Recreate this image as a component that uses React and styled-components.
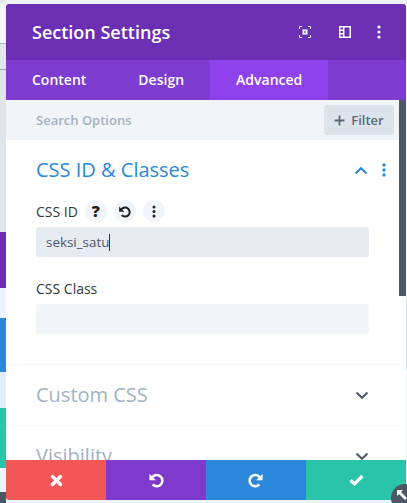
import React from 'react';
import styled, { createGlobalStyle } from 'styled-components';

const GlobalStyle = createGlobalStyle`
  html, body { margin: 0; padding: 0; }
  body { font-family: "Open Sans", "Noto Sans", sans-serif; }
  * { box-sizing: border-box; }
`;

const leftBands = [
  { h: 4, c: '#e8ebee' }, { h: 39, c: '#f4f8fc' }, { h: 1, c: '#a9b4bf' }, { h: 25, c: '#e2e5e9' },
  { h: 1, c: '#8fa3b5' }, { h: 162, c: '#dfe4ea' }, { h: 56, c: '#6b2fb3' }, { h: 30, c: '#ebf3fc' },
  { h: 54, c: '#2b87da' }, { h: 36, c: '#e3edf7' }, { h: 60, c: '#29c4a9' }, { h: 24, c: '#eef5fd' },
  { h: 6, c: '#4c5866' }, { h: 5, c: '#4c5866' },
];

const UndoIcon = ({ size = 16, color = '#fff', flip }) => (
  <svg width={size} height={size} viewBox="0 0 16 16" style={flip ? { transform: 'scaleX(-1)' } : undefined}>
    <path d="M4.4 5.2A5.6 5.6 0 1 1 4.6 12.4" fill="none" stroke={color} strokeWidth="2.5" />
    <path d="M1.4 1.8V8.2H7.8Z" fill={color} />
  </svg>
);

const Dots = ({ color = '#fff', gap = 5, r = 1.6 }) => (
  <svg width="6" height={gap * 2 + 6} viewBox={`0 0 6 ${gap * 2 + 6}`}>
    <circle cx="3" cy="3" r={r} fill={color} />
    <circle cx="3" cy={3 + gap} r={r} fill={color} />
    <circle cx="3" cy={3 + gap * 2} r={r} fill={color} />
  </svg>
);

const Chevron = ({ up, color = '#4c5866' }) => (
  <svg width="14" height="9" viewBox="0 0 14 9">
    <path d={up ? 'M1.5 7.5L7 2.2l5.5 5.3' : 'M1.5 1.5L7 6.8l5.5-5.3'} fill="none" stroke={color} strokeWidth="2" />
  </svg>
);

export default function App() {
  return (
    <Page>
      <GlobalStyle />
      <LeftStrip>
        {leftBands.map((b, i) => (
          <Band key={i} $h={b.h} $c={b.c} />
        ))}
      </LeftStrip>
      <Modal>
        <Header>
          <Title>Section Settings</Title>
          <HeaderIcons>
            <svg width="12" height="12" viewBox="0 0 12 12" fill="none">
              <path d="M.5 3V.5H3M9 .5h2.500V3M11.500 9v2.500H9M3 11.500H.5V9" stroke="#fff" strokeWidth="1" />
              <rect x="3.500" y="3.500" width="5" height="5" fill="#fff" />
              <rect x="5.200" y="5.200" width="1.600" height="1.600" fill="#6b2fb3" />
            </svg>
            <svg width="12" height="12" viewBox="0 0 12 12">
              <path
                fillRule="evenodd"
                d="M0 0h12v12H0ZM1.500 1.500V3.500H4V1.500ZM1.500 5V7H4V5ZM1.500 8.500V10.500H4V8.500ZM5.500 1.500V10.500H10.500V1.500Z"
                fill="#fff"
              />
            </svg>
            <Dots />
          </HeaderIcons>
        </Header>
        <Tabs>
          <Tab>Content</Tab>
          <Tab>Design</Tab>
          <Tab $active>Advanced</Tab>
        </Tabs>
        <ScrollRow>
          <Content>
            <SearchRow>
              <SearchText>Search Options</SearchText>
              <FilterButton>
                <svg width="11" height="11" viewBox="0 0 11 11">
                  <path d="M5.500 .5v10M.5 5.500h10" stroke="#5c6978" strokeWidth="1.800" />
                </svg>
                Filter
              </FilterButton>
            </SearchRow>
            <Section>
              <SectionHead>
                <SectionTitle $open>CSS ID &amp; Classes</SectionTitle>
                <Chevron up color="#2b87da" />
                <Dots color="#2b87da" gap={5} r={1.7} />
              </SectionHead>
              <Field>
                <LabelRow>
                  <Label>CSS ID</Label>
                  <RoundButtons>
                    <RoundButton>
                      <Question>?</Question>
                    </RoundButton>
                    <RoundButton>
                      <UndoIcon size={13} color="#1f1f1f" />
                    </RoundButton>
                    <RoundButton>
                      <Dots color="#1f1f1f" gap={4.5} r={1.5} />
                    </RoundButton>
                  </RoundButtons>
                </LabelRow>
                <Input $focus>
                  seksi_satu
                  <Caret />
                </Input>
              </Field>
              <Field>
                <LabelRow>
                  <Label>CSS Class</Label>
                </LabelRow>
                <Input />
              </Field>
            </Section>
            <Collapsed>
              <SectionTitle>Custom CSS</SectionTitle>
              <Chevron />
            </Collapsed>
            <Collapsed>
              <SectionTitle>Visibility</SectionTitle>
              <Chevron />
            </Collapsed>
          </Content>
          <Track>
            <Thumb />
          </Track>
        </ScrollRow>
        <Footer>
          <FootButton $c="#f25757">
            <svg width="13" height="13" viewBox="0 0 13 13">
              <path d="M2.500 2.500l8 8M10.500 2.500l-8 8" stroke="#fff" strokeWidth="3.400" strokeLinecap="round" />
            </svg>
          </FootButton>
          <FootButton $c="#7f3acd">
            <UndoIcon />
          </FootButton>
          <FootButton $c="#2b87da">
            <UndoIcon flip />
          </FootButton>
          <FootButton $c="#29c4a9">
            <svg width="15" height="12" viewBox="0 0 15 12">
              <path d="M1.600 6.200l3.900 3.600L13.400 2" fill="none" stroke="#fff" strokeWidth="3.200" />
            </svg>
          </FootButton>
        </Footer>
      </Modal>
      <RightStrip />
      <ResizeHandle>
        <svg width="12" height="12" viewBox="0 0 12 12">
          <path d="M1 1h6L5 3l6 6-2 2-6-6-2 2Z" fill="#fff" />
        </svg>
      </ResizeHandle>
    </Page>
  );
}

const Page = styled.div`
  position: relative;
  width: 407px;
  height: 503px;
  display: flex;
  overflow: hidden;
  background: #eef3f9;
`;

const LeftStrip = styled.div`
  width: 6px;
  display: flex;
  flex-direction: column;
  flex-shrink: 0;
`;

const Band = styled.div`
  height: ${(p) => p.$h}px;
  background: ${(p) => p.$c};
  flex-shrink: 0;
`;

const RightStrip = styled.div`
  width: 1px;
  background: linear-gradient(#e8ebee 0 4px, #f1f3f6 4px 300px, #d8e6ec 300px 370px, #eef3f9 370px);
`;

const Modal = styled.div`
  width: 400px;
  height: 496px;
  margin-top: 4px;
  display: flex;
  flex-direction: column;
  border-radius: 3px;
  overflow: hidden;
  background: #fff;
`;

const Header = styled.div`
  height: 56px;
  background: #6b2fb3;
  display: flex;
  align-items: center;
  justify-content: space-between;
  padding: 0 24px 0 26px;
  flex-shrink: 0;
`;

const Title = styled.div`
  color: #fff;
  font-size: 18px;
  font-weight: 600;
  padding-bottom: 1px;
`;

const HeaderIcons = styled.div`
  display: flex;
  align-items: center;
  gap: 28px;

  & > svg:last-child {
    margin-left: -3px;
  }
`;

const Tabs = styled.div`
  height: 40px;
  background: #7e3bd0;
  display: flex;
  flex-shrink: 0;
`;

const Tab = styled.div`
  padding: 0 26px 1px;
  display: flex;
  align-items: center;
  color: #fff;
  font-size: 14px;
  font-weight: 600;
  background: ${(p) => (p.$active ? '#8f42ec' : 'transparent')};
`;

const ScrollRow = styled.div`
  flex: 1;
  min-height: 0;
  display: flex;
`;

const Content = styled.div`
  flex: 1;
  min-width: 0;
  overflow: hidden;
`;

const Track = styled.div`
  width: 7px;
  flex-shrink: 0;
`;

const Thumb = styled.div`
  height: 196px;
  background: #4c5866;
`;

const SearchRow = styled.div`
  height: 40px;
  background: #f1f5f9;
  display: flex;
  align-items: center;
  justify-content: space-between;
  padding: 0 5px 0 30px;
`;

const SearchText = styled.div`
  color: #a3b0c2;
  font-size: 13px;
  font-weight: 600;
`;

const FilterButton = styled.div`
  width: 70px;
  height: 30px;
  background: #dde3ea;
  border-radius: 3px;
  display: flex;
  align-items: center;
  justify-content: center;
  gap: 6px;
  color: #5c6978;
  font-size: 13px;
  font-weight: 600;
`;

const Section = styled.div`
  height: 225px;
  padding: 19px 30px 0;
  border-bottom: 1px solid #f1f5f9;
`;

const SectionHead = styled.div`
  display: flex;
  align-items: center;
  height: 22px;
  gap: 13px;
  margin-right: -18px;
  margin-bottom: 19px;

  & > svg:first-of-type {
    margin-left: auto;
  }
`;

const SectionTitle = styled.div`
  font-size: 20px;
  font-weight: 400;
  line-height: 22px;
  color: ${(p) => (p.$open ? '#2b87da' : '#a3b1c4')};
`;

const Field = styled.div`
  margin-bottom: 20px;
`;

const LabelRow = styled.div`
  display: flex;
  align-items: center;
  height: 22px;
  margin-bottom: 5px;
`;

const Label = styled.div`
  color: #32373c;
  font-size: 14px;
  font-weight: 400;
`;

const RoundButtons = styled.div`
  display: flex;
  gap: 7px;
  margin-left: 7px;
`;

const RoundButton = styled.div`
  width: 22px;
  height: 22px;
  border-radius: 50%;
  background: #f1f5f9;
  display: flex;
  align-items: center;
  justify-content: center;
`;

const Question = styled.span`
  color: #1f1f1f;
  font-size: 16px;
  font-weight: 800;
  line-height: 1;
`;

const Input = styled.div`
  width: 333px;
  height: 30px;
  border-radius: 3px;
  background: ${(p) => (p.$focus ? '#e6ebf2' : '#f1f4f9')};
  color: #4c5866;
  font-size: 13.400px;
  padding: 0 10px;
  display: flex;
  align-items: center;
`;

const Caret = styled.span`
  width: 1px;
  height: 17px;
  background: #32373c;
`;

const Collapsed = styled.div`
  height: 61px;
  padding: 0 30px;
  display: flex;
  align-items: center;
  justify-content: space-between;
  border-bottom: 1px solid #f1f5f9;

  & > svg {
    margin-right: 0;
  }
`;

const Footer = styled.div`
  height: 40px;
  display: flex;
  flex-shrink: 0;
`;

const FootButton = styled.div`
  width: 100px;
  background: ${(p) => p.$c};
  display: flex;
  align-items: center;
  justify-content: center;
`;

const ResizeHandle = styled.div`
  position: absolute;
  left: 391px;
  top: 484px;
  width: 28px;
  height: 28px;
  border-radius: 50%;
  background: #4c5866;
  padding: 5px 0 0 5px;
  display: flex;
`;
